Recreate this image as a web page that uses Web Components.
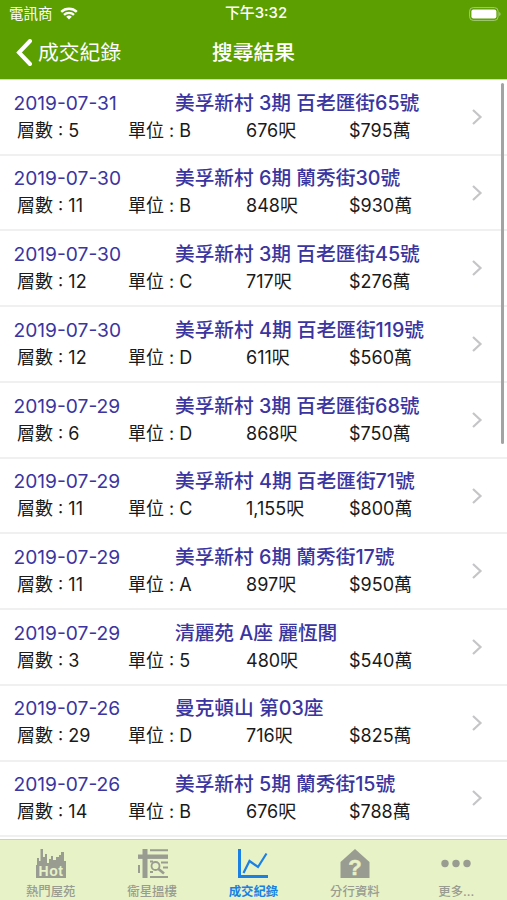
<!DOCTYPE html>
<html lang="zh-Hant">
<head>
<meta charset="utf-8">
<title>搜尋結果</title>
<style>
    body {
        margin: 0;
        width: 507px;
        height: 900px;
        overflow: hidden;
        background: white;
        font-family: Inter, "Noto Sans CJK TC", sans-serif;
    }
</style>
</head>
<body>
<app-screen>
    <status-bar slot="header" carrier="電訊商">下午3:32</status-bar>
    <nav-bar slot="header" back="成交紀錄">搜尋結果</nav-bar>
    <record-list></record-list>
    <tab-bar slot="footer">
        <tab-item icon="hot">熱門屋苑</tab-item>
        <tab-item icon="map">衞星搵樓</tab-item>
        <tab-item icon="chart" selected>成交紀錄</tab-item>
        <tab-item icon="branch">分行資料</tab-item>
        <tab-item icon="more">更多...</tab-item>
    </tab-bar>
</app-screen>

<script>
(function () {

    const RECORDS = [
        ["2019-07-31", "美孚新村 3期 百老匯街65號", "5", "B", "676呎", "$795萬"],
        ["2019-07-30", "美孚新村 6期 蘭秀街30號", "11", "B", "848呎", "$930萬"],
        ["2019-07-30", "美孚新村 3期 百老匯街45號", "12", "C", "717呎", "$276萬"],
        ["2019-07-30", "美孚新村 4期 百老匯街119號", "12", "D", "611呎", "$560萬"],
        ["2019-07-29", "美孚新村 3期 百老匯街68號", "6", "D", "868呎", "$750萬"],
        ["2019-07-29", "美孚新村 4期 百老匯街71號", "11", "C", "1,155呎", "$800萬"],
        ["2019-07-29", "美孚新村 6期 蘭秀街17號", "11", "A", "897呎", "$950萬"],
        ["2019-07-29", "清麗苑 A座 麗恆閣", "3", "5", "480呎", "$540萬"],
        ["2019-07-26", "曼克頓山 第03座", "29", "D", "716呎", "$825萬"],
        ["2019-07-26", "美孚新村 5期 蘭秀街15號", "14", "B", "676呎", "$788萬"]
    ];

    const ICONS = {
        hot: `<path fill="currentColor" d="M1 30V17H2V10H4V13H5.5V1H8V9H10V6H12V15H14V11H16V8H18V12H21V9H24V7H26V4H29V13H31V30Z"/>
              <text x="16" y="28" text-anchor="middle" font-family="Liberation Sans" font-weight="700" font-size="14" letter-spacing="0.5" fill="#e7f2c7">Hot</text>`,
        map: `<g fill="none" stroke="currentColor">
                <path stroke-width="5" d="M9 1V30"/>
                <path stroke-width="4.4" d="M2 8.7H32"/>
                <path stroke-width="2" d="M14 2.2H32M3 17V25M14 29H32M14 13.5H17M14 24H17M25 14.5H32M27 19.5H32"/>
                <circle cx="19.5" cy="18" r="4" stroke-width="1.8"/>
                <path stroke-width="2.6" d="M22.5 21L28 25.5"/>
              </g>`,
        chart: `<g fill="none" stroke="currentColor">
                <path stroke-width="3" d="M2.5 1V28.5H31"/>
                <path stroke-width="2.2" d="M6.5 25L12.5 13L21 19L29.5 5.5"/>
              </g>`,
        branch: `<path fill="currentColor" d="M16 1L30.5 14V30H1.5V14Z"/>
              <text x="16" y="27" text-anchor="middle" font-family="Liberation Sans" font-weight="700" font-size="22" fill="#e7f2c7" stroke="#e7f2c7" stroke-width="0.5">?</text>`,
        more: `<g fill="currentColor"><circle cx="5" cy="15.5" r="3.7"/><circle cx="16" cy="15.5" r="3.7"/><circle cx="27" cy="15.5" r="3.7"/></g>`
    };

    class AppScreen extends HTMLElement {
        constructor() {
            super();
            this.attachShadow({ mode: 'open' }).innerHTML = `
            <style>
                :host {
                    display: flex;
                    flex-direction: column;
                    height: 900px;
                }
                header {
                    box-sizing: border-box;
                    height: 80px;
                    border-bottom: 1px solid #cbe5a5;
                    background: #5b9f00;
                    color: white;
                }
                main {
                    flex: 1;
                    min-height: 0;
                    overflow: hidden;
                }
            </style>
            <header><slot name="header"></slot></header>
            <main><slot></slot></main>
            <slot name="footer"></slot>
            `;
        }
    }

    class StatusBar extends HTMLElement {
        constructor() {
            super();
            this.attachShadow({ mode: 'open' }).innerHTML = `
            <style>
                :host {
                    display: grid;
                    grid-template-columns: 1fr auto 1fr;
                    align-items: center;
                    height: 27px;
                    padding: 0 6px 0 9px;
                    font-size: 15px;
                    line-height: 27px;
                }
                .left {
                    display: flex;
                    align-items: center;
                    gap: 7px;
                    font-size: 14.5px;
                }
                .time {
                    font-weight: 500;
                    font-size: 14.9px;
                    padding-left: 2px;
                }
                .battery {
                    justify-self: end;
                }
                svg { display: block; }
            </style>
            <div class="left">
                <span class="carrier"></span>
                <svg width="18" height="13" viewBox="0 0 18 13">
                    <g fill="none" stroke="white" stroke-width="2.4">
                        <path d="M1.2 4.8A11.3 11.3 0 0 1 16.8 4.8"/>
                        <path d="M4 7.9A7.3 7.3 0 0 1 14 7.9"/>
                    </g>
                    <path fill="white" d="M9 12.6L6.2 9.8A4 4 0 0 1 11.8 9.8Z"/>
                </svg>
            </div>
            <span class="time"><slot></slot></span>
            <svg class="battery" width="32" height="14" viewBox="0 0 32 14">
                <rect x="0.6" y="0.6" width="28.5" height="12.8" rx="3.6" fill="none" stroke="#a5cc75" stroke-width="1"/>
                <rect x="2.4" y="2.4" width="25" height="9.2" rx="2" fill="white"/>
                <path d="M30.2 5V9Q31.6 8.4 31.6 7T30.2 5" fill="#a5cc75"/>
            </svg>
            `;
        }

        connectedCallback() {
            this.shadowRoot.querySelector(".carrier").textContent = this.getAttribute("carrier");
        }
    }

    class NavBar extends HTMLElement {
        constructor() {
            super();
            this.attachShadow({ mode: 'open' }).innerHTML = `
            <style>
                :host {
                    display: grid;
                    grid-template-columns: 1fr auto 1fr;
                    align-items: center;
                    height: 52px;
                    padding: 0 16px;
                    font-size: 20.8px;
                    line-height: 52px;
                }
                .back {
                    display: flex;
                    align-items: center;
                    gap: 6px;
                }
                .back svg { margin-top: -1px; }
                .title { font-weight: 500; }
            </style>
            <div class="back">
                <svg width="16" height="27" viewBox="0 0 16 27">
                    <path d="M14 2L3 13.5L14 25" fill="none" stroke="white" stroke-width="4" stroke-linecap="round"/>
                </svg>
                <span class="label"></span>
            </div>
            <span class="title"><slot></slot></span>
            `;
        }

        connectedCallback() {
            this.shadowRoot.querySelector(".label").textContent = this.getAttribute("back");
        }
    }

    class RecordList extends HTMLElement {
        constructor() {
            super();
            this.attachShadow({ mode: 'open' }).innerHTML = `
            <style>
                :host {
                    display: block;
                    position: relative;
                }
                .scrollbar {
                    position: absolute;
                    top: 3px;
                    right: 3px;
                    width: 3.5px;
                    height: 361px;
                    border-radius: 2px;
                    background: #a3a3a3;
                }
            </style>
            <div class="rows"></div>
            <div class="scrollbar"></div>
            `;
        }

        connectedCallback() {
            var rows = this.shadowRoot.querySelector(".rows");
            for (let i = 0; i < RECORDS.length; i++) {
                const row = document.createElement("record-row");
                row.record = RECORDS[i];
                rows.appendChild(row);
            }
        }
    }

    class RecordRow extends HTMLElement {
        constructor() {
            super();
            this.attachShadow({ mode: 'open' });
        }

        connectedCallback() {
            const [date, estate, floor, unit, area, price] = this.record;
            this.shadowRoot.innerHTML = `
            <style>
                :host {
                    display: flex;
                    align-items: center;
                    box-sizing: border-box;
                    height: 75.74px;
                    padding-right: 24px;
                    border-bottom: 2px solid #f0f0f0;
                    white-space: nowrap;
                }
                .content {
                    flex: 1;
                    padding-bottom: 0.6px;
                }
                .top {
                    display: grid;
                    grid-template-columns: 161.5px 1fr;
                    padding-left: 13.5px;
                    font-size: 19.7px;
                    line-height: 27px;
                    color: #3a35a0;
                }
                .date { font-size: 19.2px; }
                .estate { font-weight: 500; }
                .bottom {
                    display: grid;
                    grid-template-columns: 111px 118px 103px 1fr;
                    padding-left: 17px;
                    font-size: 18px;
                    line-height: 27px;
                    color: #1a1a1a;
                }
            </style>
            <div class="content">
                <div class="top">
                    <span class="date">${date}</span>
                    <span class="estate">${estate}</span>
                </div>
                <div class="bottom">
                    <span>層數 : ${floor}</span>
                    <span>單位 : ${unit}</span>
                    <span>${area}</span>
                    <span>${price}</span>
                </div>
            </div>
            <svg width="12" height="18" viewBox="0 0 12 18">
                <path d="M2 2L9.5 9L2 16" fill="none" stroke="#c5c5c8" stroke-width="2.2"/>
            </svg>
            `;
        }
    }

    class TabBar extends HTMLElement {
        constructor() {
            super();
            this.attachShadow({ mode: 'open' }).innerHTML = `
            <style>
                :host {
                    display: grid;
                    grid-template-columns: repeat(5, 1fr);
                    box-sizing: border-box;
                    height: 61px;
                    border-top: 1px solid #ccd4b5;
                    background: #e7f2c7;
                }
            </style>
            <slot></slot>
            `;
        }
    }

    class TabItem extends HTMLElement {
        constructor() {
            super();
            this.attachShadow({ mode: 'open' });
        }

        connectedCallback() {
            this.shadowRoot.innerHTML = `
            <style>
                :host {
                    display: flex;
                    flex-direction: column;
                    align-items: center;
                    padding-top: 8px;
                    font-size: 12.4px;
                    line-height: 18px;
                    font-weight: 500;
                    color: #999c91;
                }
                :host([selected]) {
                    color: #1a80e6;
                    font-weight: 700;
                }
                svg {
                    display: block;
                    margin-bottom: 4px;
                }
            </style>
            <svg width="32" height="31" viewBox="0 0 32 31">${ICONS[this.getAttribute("icon")]}</svg>
            <span><slot></slot></span>
            `;
        }
    }

    customElements.define('app-screen', AppScreen);
    customElements.define('status-bar', StatusBar);
    customElements.define('nav-bar', NavBar);
    customElements.define('record-row', RecordRow);
    customElements.define('record-list', RecordList);
    customElements.define('tab-bar', TabBar);
    customElements.define('tab-item', TabItem);
})();
</script>
</body>
</html>
